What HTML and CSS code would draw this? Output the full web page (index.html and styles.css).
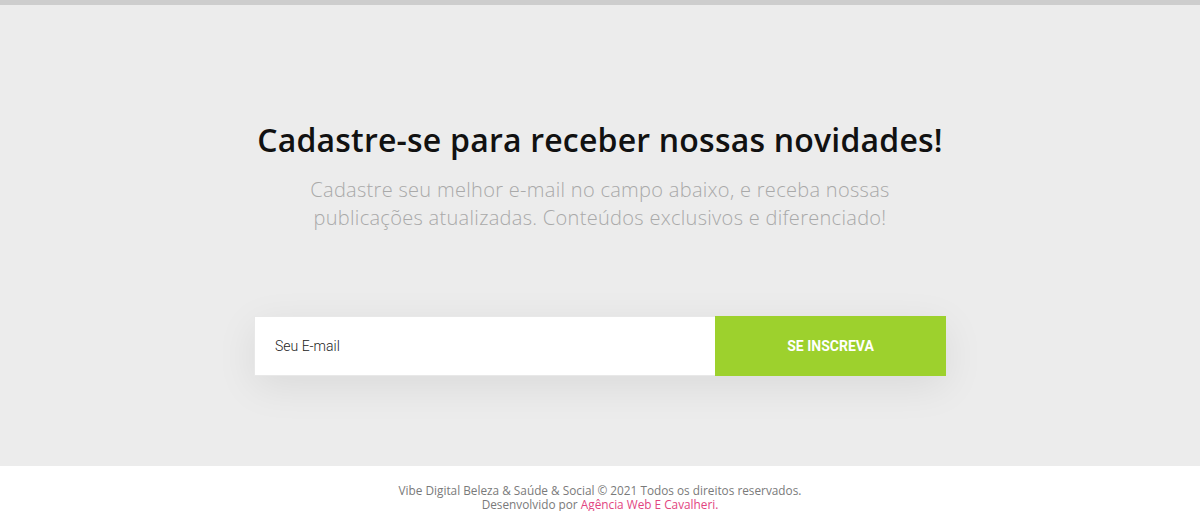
FILE: index.html
```html
<!DOCTYPE html>
<html lang="pt-BR">
<head>
<meta charset="utf-8">
<title>Newsletter</title>
<link rel="stylesheet" href="styles.css">
</head>
<body>
<div class="topbar"></div>
<section class="newsletter">
  <h2 class="title">Cadastre-se para receber nossas novidades!</h2>
  <p class="subtitle">Cadastre seu melhor e-mail no campo abaixo, e receba nossas publicações atualizadas. Conteúdos exclusivos e diferenciado!</p>
  <form class="form">
    <input class="email" type="email" placeholder="Seu E-mail">
    <button class="submit" type="button">SE INSCREVA</button>
  </form>
</section>
<footer class="footer">
  <p class="copy">Vibe Digital Beleza &amp; Saúde &amp; Social © 2021 Todos os direitos reservados.<br>Desenvolvido por <a class="link" href="#">Agência Web E Cavalheri.</a></p>
</footer>
</body>
</html>
```

FILE: styles.css
```css
* { box-sizing: border-box; }
html, body { margin: 0; padding: 0; }
body {
  background: #fff;
  font-family: "Open Sans", "Noto Sans", sans-serif;
}
.topbar {
  height: 5px;
  background: #cdcdcd;
}
.newsletter {
  background: #ececec;
  height: 461px;
  display: flex;
  flex-direction: column;
  align-items: center;
  padding-top: 113px;
}
.title {
  margin: 0;
  font-family: "Open Sans", sans-serif;
  font-weight: 600;
  font-size: 32px;
  line-height: 44px;
  color: #111;
  letter-spacing: 0.2px;
}
.subtitle {
  margin: 14px 0 0;
  width: 640px;
  text-align: center;
  font-family: "Open Sans", sans-serif;
  font-weight: 300;
  font-size: 20px;
  letter-spacing: 0.3px;
  line-height: 28px;
  color: #a9a9a9;
}
.form {
  margin-top: 84px;
  display: flex;
  width: 692px;
  height: 60px;
  box-shadow: 0 10px 40px rgba(0,0,0,0.08);
}
.email {
  flex: 1;
  border: 1px solid #e8e8e8;
  border-right: none;
  background: #fff;
  padding: 0 20px;
  font-family: Roboto, sans-serif;
  font-weight: 300;
  font-size: 14px;
  color: #222;
  outline: none;
}
.email::placeholder { color: #222; }
.submit {
  width: 231px;
  border: none;
  background: #9dd12d;
  color: #fff;
  font-family: Roboto, sans-serif;
  font-weight: 700;
  font-size: 14px;
  cursor: pointer;
}
.footer {
  background: #fff;
  padding-top: 17px;
  text-align: center;
}
.copy {
  margin: 0;
  font-family: "Open Sans", sans-serif;
  font-size: 11.8px;
  line-height: 14px;
  color: #7a7a7a;
}
.link {
  color: #e2457f;
  text-decoration: none;
}
```
